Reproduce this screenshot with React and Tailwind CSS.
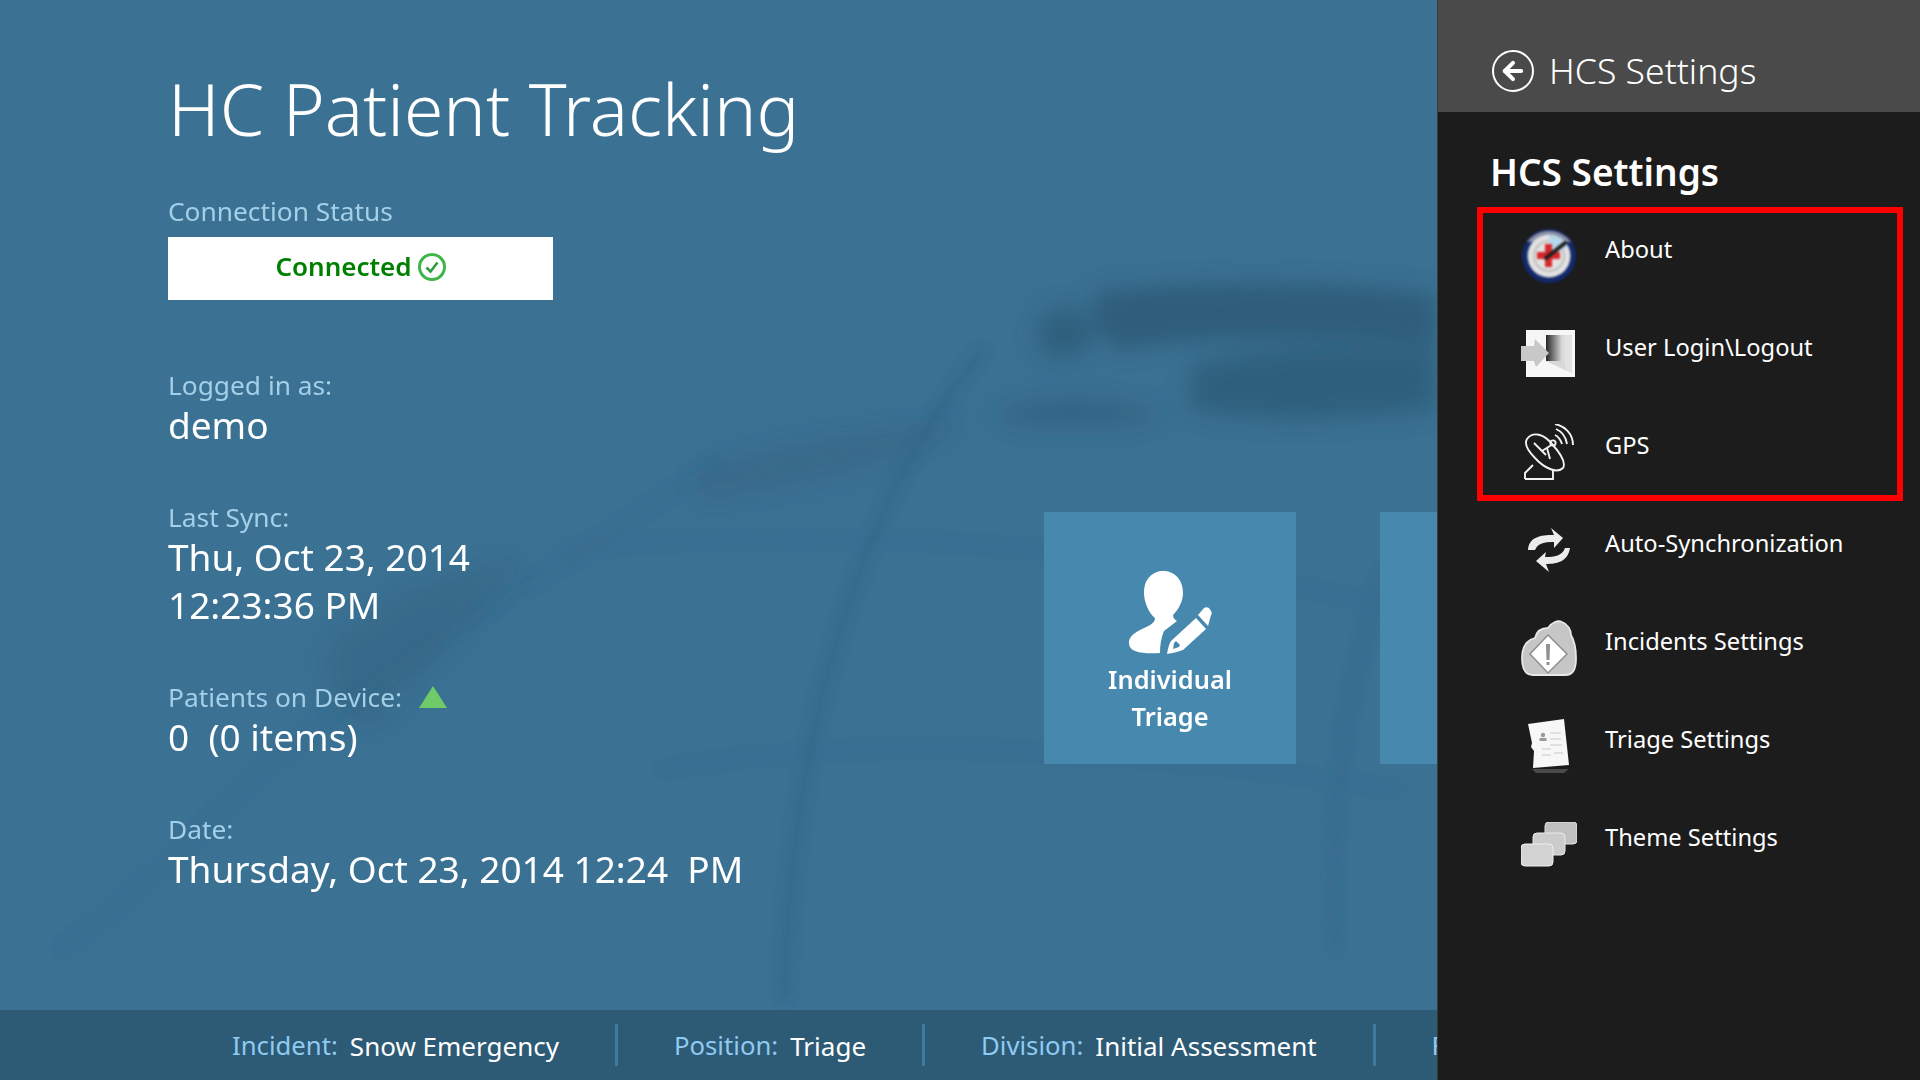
import React from 'react';
import { ArrowLeft } from 'lucide-react';

const labelClass = 'text-[26.3px] leading-[32px] text-[#a3d0e8]';
const valueClass = 'text-[37px] leading-[48px] text-white';

// blurred world map behind the content
const BackdropMap = () => (
  <svg className="absolute inset-0 h-full w-full" viewBox="0 0 1438 1010" preserveAspectRatio="none">
    <defs>
      <filter id="soft" x="-20%" y="-20%" width="140%" height="140%"><feGaussianBlur stdDeviation="6" /></filter>
      <filter id="softer" x="-20%" y="-20%" width="140%" height="140%"><feGaussianBlur stdDeviation="11" /></filter>
    </defs>
    <g fill="#2a5873" filter="url(#softer)">
      <path d="M1095 292 C1200 280 1340 280 1438 295 L1438 345 C1340 335 1210 335 1120 350 C1100 340 1090 315 1095 292 Z" opacity="0.8" />
      <path d="M1045 315 C1060 300 1085 305 1095 330 C1095 355 1070 365 1045 355 C1035 345 1035 330 1045 315 Z" opacity="0.7" />
      <path d="M1190 365 C1260 345 1360 340 1438 350 L1438 410 C1360 420 1260 425 1190 410 Z" opacity="0.7" />
      <path d="M1000 410 C1050 395 1110 395 1170 415 C1120 430 1050 430 1000 420 Z" opacity="0.5" />
      <path d="M700 470 C780 440 880 430 960 420 C900 470 790 490 700 500 Z" opacity="0.25" />
      <path d="M330 640 C400 590 450 570 520 560 C480 610 420 680 370 730 C340 720 320 680 330 640 Z" opacity="0.28" />
    </g>
    <g fill="none" stroke="#2c5d7d" filter="url(#soft)">
      <path d="M985 350 C880 470 790 700 785 1000" strokeWidth="7" opacity="0.5" />
      <path d="M1385 570 C1345 690 1330 800 1335 950" strokeWidth="6" opacity="0.35" />
      <path d="M716 465 C640 510 590 550 520 590 C430 640 340 700 230 800 C170 860 130 900 60 950" strokeWidth="9" opacity="0.18" />
      <path d="M560 550 C760 530 1100 530 1400 610" strokeWidth="4" opacity="0.18" />
      <path d="M660 770 C820 740 1100 740 1400 790" strokeWidth="4" opacity="0.18" />
    </g>
  </svg>
);

const TrackerIcon = () => (
  <svg width="56" height="56" viewBox="0 0 56 56" className="blur-[0.8px]">
    <circle cx="28" cy="28" r="27" fill="#13296a" />
    <path d="M6 14 A27 27 0 0 1 50 14 Z" fill="#8a8fa5" />
    <circle cx="28" cy="28" r="21.5" fill="#e2e2e2" />
    <circle cx="28" cy="28" r="15" fill="none" stroke="#b5b5b5" strokeWidth="1.5" />
    <path d="M28 7 A21 21 0 0 1 47 19 L28 28 Z" fill="#b6d8ea" />
    <path d="M24 16 h7 v8 h8 v7 h-8 v8 h-7 v-8 h-8 v-7 h8 z" fill="#d6282a" />
    <path d="M25 30 L44 15" stroke="#1f1f1f" strokeWidth="4" strokeLinecap="round" />
  </svg>
);

const DoorIcon = () => (
  <svg width="56" height="50" viewBox="0 0 56 50" className="blur-[0.5px]">
    <defs>
      <linearGradient id="door" x1="0" x2="1" y1="0" y2="0">
        <stop offset="0" stopColor="#1c1c1c" />
        <stop offset="0.85" stopColor="#dcdcdc" />
      </linearGradient>
    </defs>
    <path d="M5 1 H54 V48 H5 Z" fill="#f6f6f6" />
    <path d="M25 6 H51 V44 L25 32 Z" fill="#d8d8d8" />
    <path d="M25 6 H44 V32 H25 Z" fill="url(#door)" opacity="0.95" />
    <path d="M44 6 H51 V44 L44 41 Z" fill="#e2e2e2" />
    <path d="M25 32 L44 32 V41 Z" fill="#d8d8d8" />
    <path d="M14 10 L28 24 L15 38 L13 32 H0 V17 H13 Z" fill="#c8c8c8" />
  </svg>
);

const DishIcon = () => (
  <svg width="50" height="56" viewBox="0 0 50 56" fill="none" stroke="#f2f2f2" strokeWidth="1.9">
    <path d="M3 15 C9 7 20 10 28 20 C37 30 42 39 39 44 C33 50 20 44 11 34 C4 27 0 20 3 15 Z" />
    <path d="M10 19 L22 31 M18 27 L29 20 M23 24 L26 35" />
    <circle cx="29" cy="19" r="2.6" />
    <path d="M1 55 V49 L9 41 M1 55 H29 V46" />
    <path d="M31 11 C35 13 37 17 38 20 M32 5 C39 8 42 14 43 20 M31 0 C41 2 49 10 49 21" />
  </svg>
);

const SyncIcon = () => (
  <svg width="44" height="44" viewBox="0 0 44 44" fill="#ececec" className="blur-[0.7px]">
    <path d="M1 22 C2 9 13 7 27 7 L24 0 L36 10 L27 20 L27 14 C17 14 11 15 8 22 Z" />
    <path d="M43 20 C41 33 31 36 19 36 L22 44 L9 33 L19 24 L18 29 C28 29 35 28 38 20 Z" />
  </svg>
);

const CloudWarnIcon = () => (
  <svg width="56" height="56" viewBox="0 0 56 56" className="blur-[0.4px]">
    <path d="M12 55 C3 55 1 47 1 38 C1 27 6 20 14 18 C16 10 22 8 27 8 C31 2 37 0 41 2 C47 4 50 10 50 15 C54 22 55 30 55 38 C55 48 53 55 44 55 Z" fill="#c6c6c6" stroke="#e8e8e8" strokeWidth="1.8" />
    <path d="M27 15 L46 34 L27 53 L9 34 Z" fill="#fff" stroke="#8f8f8f" strokeWidth="1.5" />
    <path d="M25 24 H29 L28.5 40 H25.5 Z M25.5 42 H28.5 V45 H25.5 Z" fill="#8f8f8f" />
  </svg>
);

const SheetIcon = () => (
  <svg width="42" height="54" viewBox="0 0 42 54" className="blur-[0.4px]">
    <path d="M0 5 L36 0 L41 46 L5 49 L6 32 L3 28 L4 24 Z" fill="#f7f7f7" />
    <path d="M4 50 H41 L36 54 H8 Z" fill="#4a4a4a" />
    <g fill="#e0e0e0">
      <circle cx="15" cy="16" r="2.2" fill="#9a9a9a" />
      <rect x="11.5" y="19" width="7" height="3" fill="#9a9a9a" />
      <rect x="22" y="13" width="11" height="2" />
      <rect x="22" y="19" width="11" height="2" />
      <rect x="22" y="25" width="12" height="2" />
      <rect x="14" y="29" width="9" height="2" />
      <rect x="14" y="35" width="9" height="2" />
      <rect x="26" y="33" width="9" height="2" />
    </g>
  </svg>
);

const StackIcon = () => (
  <svg width="56" height="45" viewBox="0 0 56 45" className="blur-[0.6px]">
    <rect x="24" y="0" width="32" height="22" rx="4" fill="#c0c0c0" stroke="#e4e4e4" />
    <rect x="12" y="11" width="32" height="22" rx="4" fill="#cccccc" stroke="#eaeaea" />
    <rect x="0" y="22" width="32" height="22" rx="4" fill="#d2d2d2" stroke="#f0f0f0" />
  </svg>
);

const PersonPenIcon = () => (
  <svg width="84" height="84" viewBox="0 0 84 84" fill="#fff">
    <path d="M35 0 C46 0 55 8 55 22 C55 31 50 39 45 44 C45 47 47 49 49 50 L36 60 C33 67 32 74 32 82 C20 83 5 82 2 76 C-1 70 2 64 12 59 C20 55 27 53 27 47 C21 42 16 32 16 21 C16 8 25 0 35 0 Z" />
    <path d="M39 83 C40 77 41 73 43 70 L68 47 L78 58 L55 79 C50 81 44 82 39 83 Z M46 72 L45 78 L51 76 L52 74 L48 70 Z" fillRule="evenodd" />
    <path d="M70 44 L76 37 C78 36 79 36 81 37 L83 40 C84 42 84 43 83 44 L80 55 Z" />
  </svg>
);

const settingsRows = [
  { label: 'About', icon: <TrackerIcon /> },
  { label: 'User Login\\Logout', icon: <DoorIcon /> },
  { label: 'GPS', icon: <DishIcon /> },
  { label: 'Auto-Synchronization', icon: <SyncIcon /> },
  { label: 'Incidents Settings', icon: <CloudWarnIcon /> },
  { label: 'Triage Settings', icon: <SheetIcon /> },
  { label: 'Theme Settings', icon: <StackIcon /> },
];

const BarItem = ({ label, value }) => (
  <div className="flex items-center gap-[12px] whitespace-nowrap pt-[3px]">
    <span className="text-[25.7px] text-[#8fcaf0]">{label}</span>
    <span className="text-[26px] text-white">{value}</span>
  </div>
);

const Divider = () => <div className="ml-[56px] mr-[56px] h-[42px] w-[3px] shrink-0 bg-[#3f7a9f]" />;

export default function App() {
  return (
    <div className="flex h-screen w-[1920px] overflow-hidden bg-[#1c1c1c] font-['Noto_Sans',sans-serif]">
      <div className="flex w-[1437px] shrink-0 flex-col overflow-hidden">
        <div className="relative flex h-[1010px] bg-[#3b7193]">
          <BackdropMap />
          <div className="relative flex w-[1044px] shrink-0 flex-col pl-[168px] pt-[60px]">
            <h1 className="whitespace-nowrap text-[71.4px] font-light leading-[98px] text-white">HC Patient Tracking</h1>
            <div className={`${labelClass} mt-[37px]`}>Connection Status</div>
            <div className="mt-[10px] flex h-[63px] w-[385px] items-center justify-center gap-[6px] bg-white pb-[4px]">
              <span className="text-[26px] font-semibold text-[#008000]">Connected</span>
              <svg width="28" height="28" viewBox="0 0 28 28" fill="none">
                <circle cx="14" cy="14" r="12.5" stroke="#3fb54a" strokeWidth="3" />
                <path d="M8.5 14.5 L12.5 18.5 L19.5 9.5" stroke="#2f9c3c" strokeWidth="2.5" />
              </svg>
            </div>
            <div className={`${labelClass} mt-[69px]`}>Logged in as:</div>
            <div className={valueClass}>demo</div>
            <div className={`${labelClass} mt-[52px]`}>Last Sync:</div>
            <div className={valueClass}>Thu, Oct 23, 2014</div>
            <div className={valueClass}>12:23:36 PM</div>
            <div className={`${labelClass} mt-[52px] flex items-center gap-[17px]`}>
              <span>Patients on Device:</span>
              <span className="h-0 w-0 border-x-[14px] border-b-[22px] border-x-transparent border-b-[#6fcb67]" />
            </div>
            <div className={`${valueClass} whitespace-pre`}>0  (0 items)</div>
            <div className={`${labelClass} mt-[52px]`}>Date:</div>
            <div className={`${valueClass} whitespace-pre`}>Thursday, Oct 23, 2014 12:24  PM</div>
          </div>
          <div className="relative flex shrink-0 gap-[84px] pt-[512px]">
            <div className="flex h-[252px] w-[252px] shrink-0 flex-col items-center bg-[#4789ae] pt-[59px]">
              <PersonPenIcon />
              <div className="mt-[6px] text-center text-[25.4px] font-semibold leading-[37px] text-white">Individual<br />Triage</div>
            </div>
            <div className="h-[252px] w-[252px] shrink-0 bg-[#4789ae]" />
          </div>
        </div>
        <div className="flex h-[70px] shrink-0 items-center bg-[#2d5a75] pl-[232px]">
          <BarItem label="Incident:" value="Snow Emergency" />
          <Divider />
          <BarItem label="Position:" value="Triage" />
          <Divider />
          <BarItem label="Division:" value="Initial Assessment" />
          <Divider />
          <BarItem label="Facility:" value="" />
        </div>
      </div>

      <div className="flex flex-1 flex-col border-l border-[#3a3a3a] text-white">
        <div className="flex h-[112px] items-center gap-[15px] bg-[#4a4a4a] pl-[54px] pt-[29px]">
          <div className="flex h-[42px] w-[42px] items-center justify-center rounded-full border-[2.5px] border-white">
            <ArrowLeft size={28} strokeWidth={3.5} />
          </div>
          <span className="text-[35.6px] font-light">HCS Settings</span>
        </div>
        <div className="pl-[52px] pt-[35px] text-[37px] font-semibold leading-[50px]">HCS Settings</div>
        <div className="relative ml-[39px] mt-[10px] w-[426px]">
          <div className="pointer-events-none absolute left-0 top-0 h-[294px] w-[426px] border-[6px] border-[#ff0000]" />
          {settingsRows.map((row) => (
            <div key={row.label} className="flex h-[98px] items-center">
              <div className="flex w-[128px] shrink-0 items-center justify-center pl-[16px]">{row.icon}</div>
              <div className="mt-[-12px] text-[23.7px]">{row.label}</div>
            </div>
          ))}
        </div>
      </div>
    </div>
  );
}
